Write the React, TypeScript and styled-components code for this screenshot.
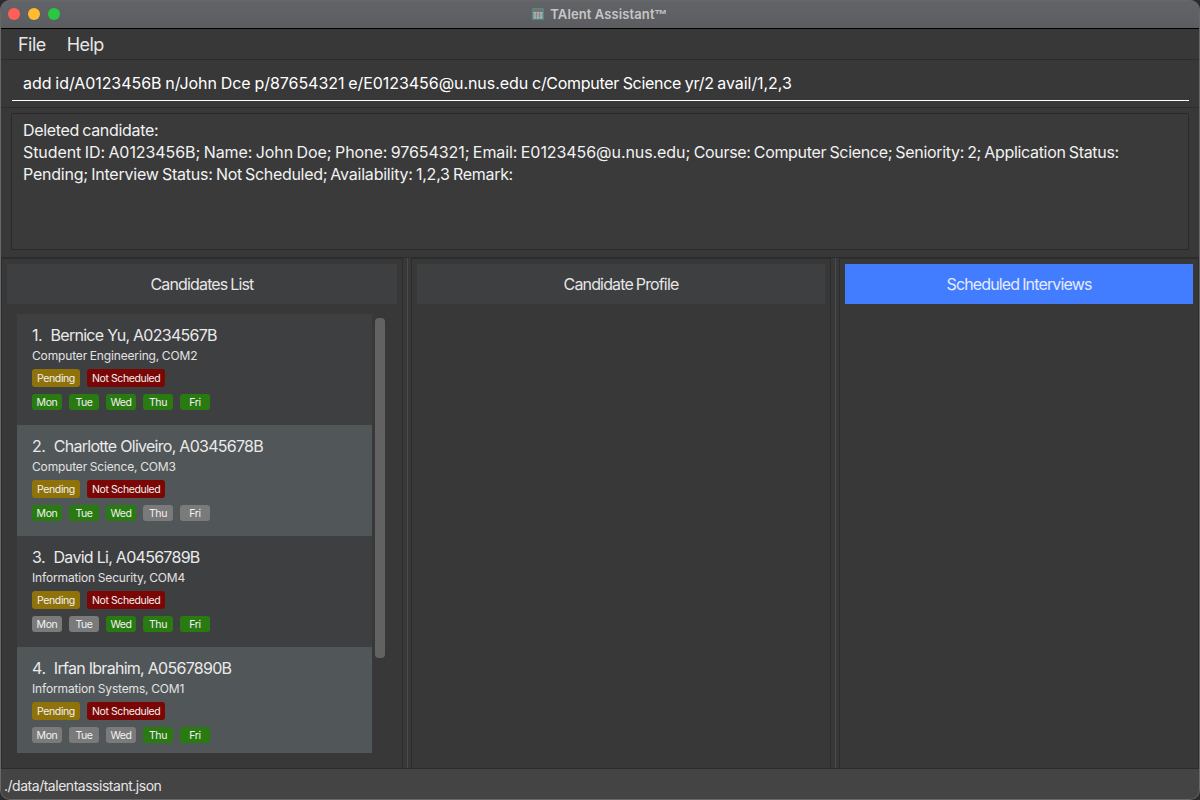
import React from "react";
import styled, { createGlobalStyle } from "styled-components";

const Global = createGlobalStyle`
  html, body { margin: 0; padding: 0; background: #2c2c2c; }
  body { font-family: Inter, "Liberation Sans", sans-serif; overflow: hidden; }
`;
const Window = styled.div`
  position: relative; width: 1200px; height: 800px; display: flex; flex-direction: column;
  background: #383838; overflow: hidden; border-radius: 10px; box-sizing: border-box;
  &::after {
    content: ""; position: absolute; inset: 0; border-radius: 10px; border: 1px solid #67686a; pointer-events: none;
  }
`;
const TitleBar = styled.div`
  height: 28px; flex: none; display: flex; align-items: center; justify-content: center; gap: 6px;
  background: linear-gradient(#636467, #5c5d60); border-bottom: 1px solid #000; position: relative;
  color: #c6c6c8; font-size: 13px; font-weight: 600; letter-spacing: 0.1px;
`;
const Trade = styled.span`
  font-family: "Liberation Sans", sans-serif; font-size: 13px; font-weight: 700;
`;
const Lights = styled.div`
  position: absolute; left: 8px; top: 8px; display: flex; gap: 8px;
`;
const Light = styled.span<{ $c: string }>`
  width: 12px; height: 12px; border-radius: 50%; background: ${p => p.$c};
`;
const MenuBar = styled.div`
  height: 30px; flex: none; display: flex; align-items: center; gap: 21px; padding-left: 18px;
  background: #383838; border-bottom: 1px solid #2c2c2c; color: #e6e6e6; font-size: 18px; letter-spacing: -0.55px;
`;
const CommandBox = styled.div`
  height: 47px; flex: none; padding: 0 11px 0 12px; background: #383838; border-bottom: 1px solid #2c2c2c;
  display: flex;
`;
const CommandText = styled.div`
  flex: 1; height: 41px; box-sizing: border-box; padding: 12px 0 0 11px; border-bottom: 1px solid #fff;
  color: #fff; font-size: 16px; line-height: 22px; white-space: pre;
  letter-spacing: -0.06px; word-spacing: -0.5px;
`;
const CommandTight = styled.span`
  letter-spacing: -0.3px;
`;
const ResultWrap = styled.div`
  height: 150px; flex: none; box-sizing: border-box; padding: 5px 11px 7px 11px; border-bottom: 1px solid #2c2c2c;
`;
const ResultBox = styled.div`
  height: 100%; box-sizing: border-box; border: 1px solid #2a2a2a; padding: 5px 11px; color: #f2f2f2;
  font-size: 16px; line-height: 22px; background: #3a3a3a; letter-spacing: -0.07px; word-spacing: -1px;
`;
const ResultTight = styled.span`
  letter-spacing: -0.32px;
`;
const ResultMid = styled.span`
  letter-spacing: -0.22px;
`;
const Panels = styled.div`
  height: 511px; flex: none; display: flex; padding-left: 1px; border-bottom: 1px solid #2c2c2c; box-sizing: border-box;
`;
const Panel = styled.div<{ $w: number }>`
  width: ${p => p.$w}px; flex: none; box-sizing: border-box; border: 1px solid #2c2c2c; border-bottom: none;
  padding: 5px; display: flex; flex-direction: column; background: #383838;
`;
const Splitter = styled.div`
  width: 8px; flex: none; display: flex; justify-content: center; background: #383838;
  &::after { content: ""; width: 1px; background: #4a4a4a; }
`;
const Header = styled.div<{ $active?: boolean }>`
  height: 40px; flex: none; display: flex; align-items: center; justify-content: center; font-size: 16px;
  letter-spacing: -0.85px; word-spacing: -0.8px;
  background: ${p => (p.$active ? "#427cff" : "#3e3f41")}; color: ${p => (p.$active ? "#e4ecff" : "#e6e6e6")};
`;
const ListArea = styled.div`
  display: flex; flex: 1; padding: 10px 0 0 10px; gap: 3px; min-height: 0;
`;
const Cards = styled.div`
  width: 355px; flex: none;
`;
const Card = styled.div<{ $alt?: boolean; $h: number }>`
  height: ${p => p.$h}px; box-sizing: border-box; padding: 10px 15px; background: ${p => (p.$alt ? "#515658" : "#3e3f41")};
`;
const Name = styled.div`
  color: #eaeaea; font-size: 16px; line-height: 22px; white-space: pre; letter-spacing: -0.72px;
`;
const Index = styled.span`
  letter-spacing: -0.4px;
`;
const Course = styled.div`
  color: #e2e2e2; font-size: 12px; line-height: 18px; margin-top: 1px; letter-spacing: -0.15px; word-spacing: -0.5px;
`;
const TagRow = styled.div<{ $mt: number }>`
  display: flex; gap: 7px; margin-top: ${p => p.$mt}px;
`;
const Tag = styled.span<{ $bg: string }>`
  display: flex; align-items: center; justify-content: center; height: 18px; box-sizing: border-box;
  padding: 0 5px; border-radius: 3px; font-size: 10.5px; letter-spacing: -0.38px; color: #f2f2f2; background: ${p => p.$bg};
`;
const Day = styled(Tag)`
  width: 30px; height: 16px; padding: 0;
`;
const Scrollbar = styled.div`
  width: 10px; height: 340px; margin-top: 4px; border-radius: 4px; background: #626262; flex: none;
`;
const Status = styled.div`
  flex: 1; background: #444; color: #e6e6e6; font-size: 14px; letter-spacing: -0.48px;
  display: flex; align-items: center; padding: 2px 0 0 4px;
`;

const GREEN = "#2a7a12", GREY = "#7a7a7a";
const days = ["Mon", "Tue", "Wed", "Thu", "Fri"];
const people = [
  { i: "1.  ", n: "Bernice Yu, A0234567B", c: "Computer Engineering, COM2", a: [1, 1, 1, 1, 1] },
  { i: "2.  ", n: "Charlotte Oliveiro, A0345678B", c: "Computer Science, COM3", a: [1, 1, 1, 0, 0] },
  { i: "3.  ", n: "David Li, A0456789B", c: "Information Security, COM4", a: [0, 0, 1, 1, 1] },
  { i: "4.  ", n: "Irfan Ibrahim, A0567890B", c: "Information Systems, COM1", a: [0, 0, 0, 1, 1] },
];

export default function App() {
  return (
    <Window>
      <Global />
      <TitleBar>
        <Lights>
          <Light $c="#ff5f57" />
          <Light $c="#febc2e" />
          <Light $c="#28c840" />
        </Lights>
        <svg width="12" height="12" viewBox="0 0 12 12">
          <rect width="12" height="12" rx="1" fill="#4f8a8b" />
          <rect x="1.5" y="1.5" width="9" height="2" fill="#8a6a5a" />
          <rect x="1.5" y="4" width="9" height="6.5" fill="#b5b5b5" />
          <path d="M1.5 6h9M1.5 8h9M4.5 4v6.5M7.5 4v6.5" stroke="#777" strokeWidth=".6" />
        </svg>
        <span>TAlent Assistant<Trade>™</Trade></span>
      </TitleBar>
      <MenuBar>
        <span>File</span>
        <span>Help</span>
      </MenuBar>
      <CommandBox>
        <CommandText>
          add id/A0123456B n/John Dce p/87654321 e/E0123456@u.nus.edu <CommandTight>c/Computer Science yr/2 </CommandTight>avail/1,2,3
        </CommandText>
      </CommandBox>
      <ResultWrap>
        <ResultBox>
          <ResultTight>Deleted candidate:</ResultTight>
          <br />
          Student ID: A0123456B; Name: John Doe; Phone: 97654321; Email: E0123456@u.nus.edu; <ResultTight>Course: Computer Science; Seniority: 2; Application Status:</ResultTight>
          <br />
          <ResultMid>Pending; Interview Status: </ResultMid><ResultTight>Not Scheduled; </ResultTight><ResultMid>Availability: 1,2,3 </ResultMid><ResultTight>Remark:</ResultTight>
        </ResultBox>
      </ResultWrap>
      <Panels>
        <Panel $w={402}>
          <Header>Candidates List</Header>
          <ListArea>
            <Cards>
              {people.map((p, i) => (
                <Card key={p.n} $alt={i % 2 === 1} $h={i === 3 ? 106 : 111}>
                  <Name><Index>{p.i}</Index>{p.n}</Name>
                  <Course>{p.c}</Course>
                  <TagRow $mt={4}>
                    <Tag $bg="#8f7209">Pending</Tag>
                    <Tag $bg="#7a0606">Not Scheduled</Tag>
                  </TagRow>
                  <TagRow $mt={7}>
                    {days.map((d, j) => (
                      <Day key={d} $bg={p.a[j] ? GREEN : GREY}>{d}</Day>
                    ))}
                  </TagRow>
                </Card>
              ))}
            </Cards>
            <Scrollbar />
          </ListArea>
        </Panel>
        <Splitter />
        <Panel $w={420}>
          <Header>Candidate Profile</Header>
        </Panel>
        <Splitter />
        <Panel $w={360}>
          <Header $active>Scheduled Interviews</Header>
        </Panel>
      </Panels>
      <Status>./data/talentassistant.json</Status>
    </Window>
  );
}
